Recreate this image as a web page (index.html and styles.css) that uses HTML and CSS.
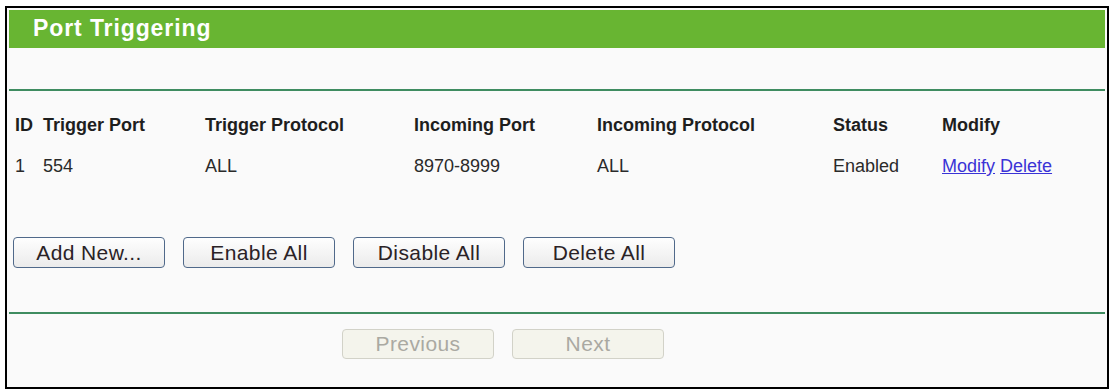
FILE: index.html
```html
<!DOCTYPE html>
<html lang="en">
<head>
    <meta charset="UTF-8">
    <title>Port Triggering</title>
    <link rel="stylesheet" href="styles.css">
</head>
<body>
    <div class="frame">
        <div class="title-bar">Port Triggering</div>

        <hr class="rule rule-top">

        <table class="rules">
            <tr class="head">
                <td class="c-id">ID</td>
                <td class="c-tport">Trigger Port</td>
                <td class="c-tproto">Trigger Protocol</td>
                <td class="c-iport">Incoming Port</td>
                <td class="c-iproto">Incoming Protocol</td>
                <td class="c-status">Status</td>
                <td>Modify</td>
            </tr>
            <tr>
                <td>1</td>
                <td>554</td>
                <td>ALL</td>
                <td>8970-8999</td>
                <td>ALL</td>
                <td>Enabled</td>
                <td><a href="#">Modify</a> <a href="#">Delete</a></td>
            </tr>
        </table>

        <div class="actions">
            <button class="btn">Add New...</button>
            <button class="btn">Enable All</button>
            <button class="btn">Disable All</button>
            <button class="btn">Delete All</button>
        </div>

        <hr class="rule rule-bottom">

        <div class="pager">
            <button class="btn" disabled>Previous</button>
            <button class="btn" disabled>Next</button>
        </div>
    </div>
</body>
</html>
```

FILE: styles.css
```css
body {
    margin: 0;
    background: #fff;
    font-family: "Liberation Sans", Arial, sans-serif;
}
.frame {
    box-sizing: border-box;
    width: 1104px;
    height: 383px;
    margin: 6px 0 0 5px;
    padding: 2px;
    border: 2px solid #000;
    background: #fafafa;
}
.title-bar {
    height: 38px;
    line-height: 36px;
    padding-left: 24px;
    background: #68b532;
    color: #fff;
    font-size: 23px;
    font-weight: bold;
    letter-spacing: 0.9px;
}
.rule {
    margin: 0;
    height: 2px;
    border: none;
    background: #3f8c60;
}
.rule-top {
    margin-top: 41px;
}
.rules {
    margin: 23px 0 0 6px;
    border-collapse: collapse;
    font-size: 18px;
    color: #2a2a2a;
}
.rules td {
    height: 41px;
    padding: 0;
    line-height: 22px;
    vertical-align: top;
    white-space: nowrap;
}
.rules .head td {
    font-weight: bold;
    color: #1e1e1e;
}
.c-id { width: 28px; }
.c-tport { width: 162px; }
.c-tproto { width: 209px; }
.c-iport { width: 183px; }
.c-iproto { width: 236px; }
.c-status { width: 109px; }
.rules a {
    color: #3a33d6;
    text-decoration: underline;
}
.actions {
    display: flex;
    gap: 18px;
    margin: 41px 0 0 4px;
}
.btn {
    width: 152px;
    height: 31px;
    padding: 0;
    border: 1px solid #50698a;
    border-radius: 4px;
    background: linear-gradient(#fefefe, #ebebeb);
    color: #2a2226;
    font-family: "Liberation Sans", Arial, sans-serif;
    font-size: 21px;
    letter-spacing: 0.4px;
}
.btn:disabled {
    border-color: #d2d2c8;
    background: #f4f4ec;
    color: #aaa9a2;
}
.rule-bottom {
    margin-top: 44px;
}
.pager {
    display: flex;
    gap: 18px;
    margin: 15px 0 0 333px;
}
.pager .btn {
    height: 30px;
}
```
